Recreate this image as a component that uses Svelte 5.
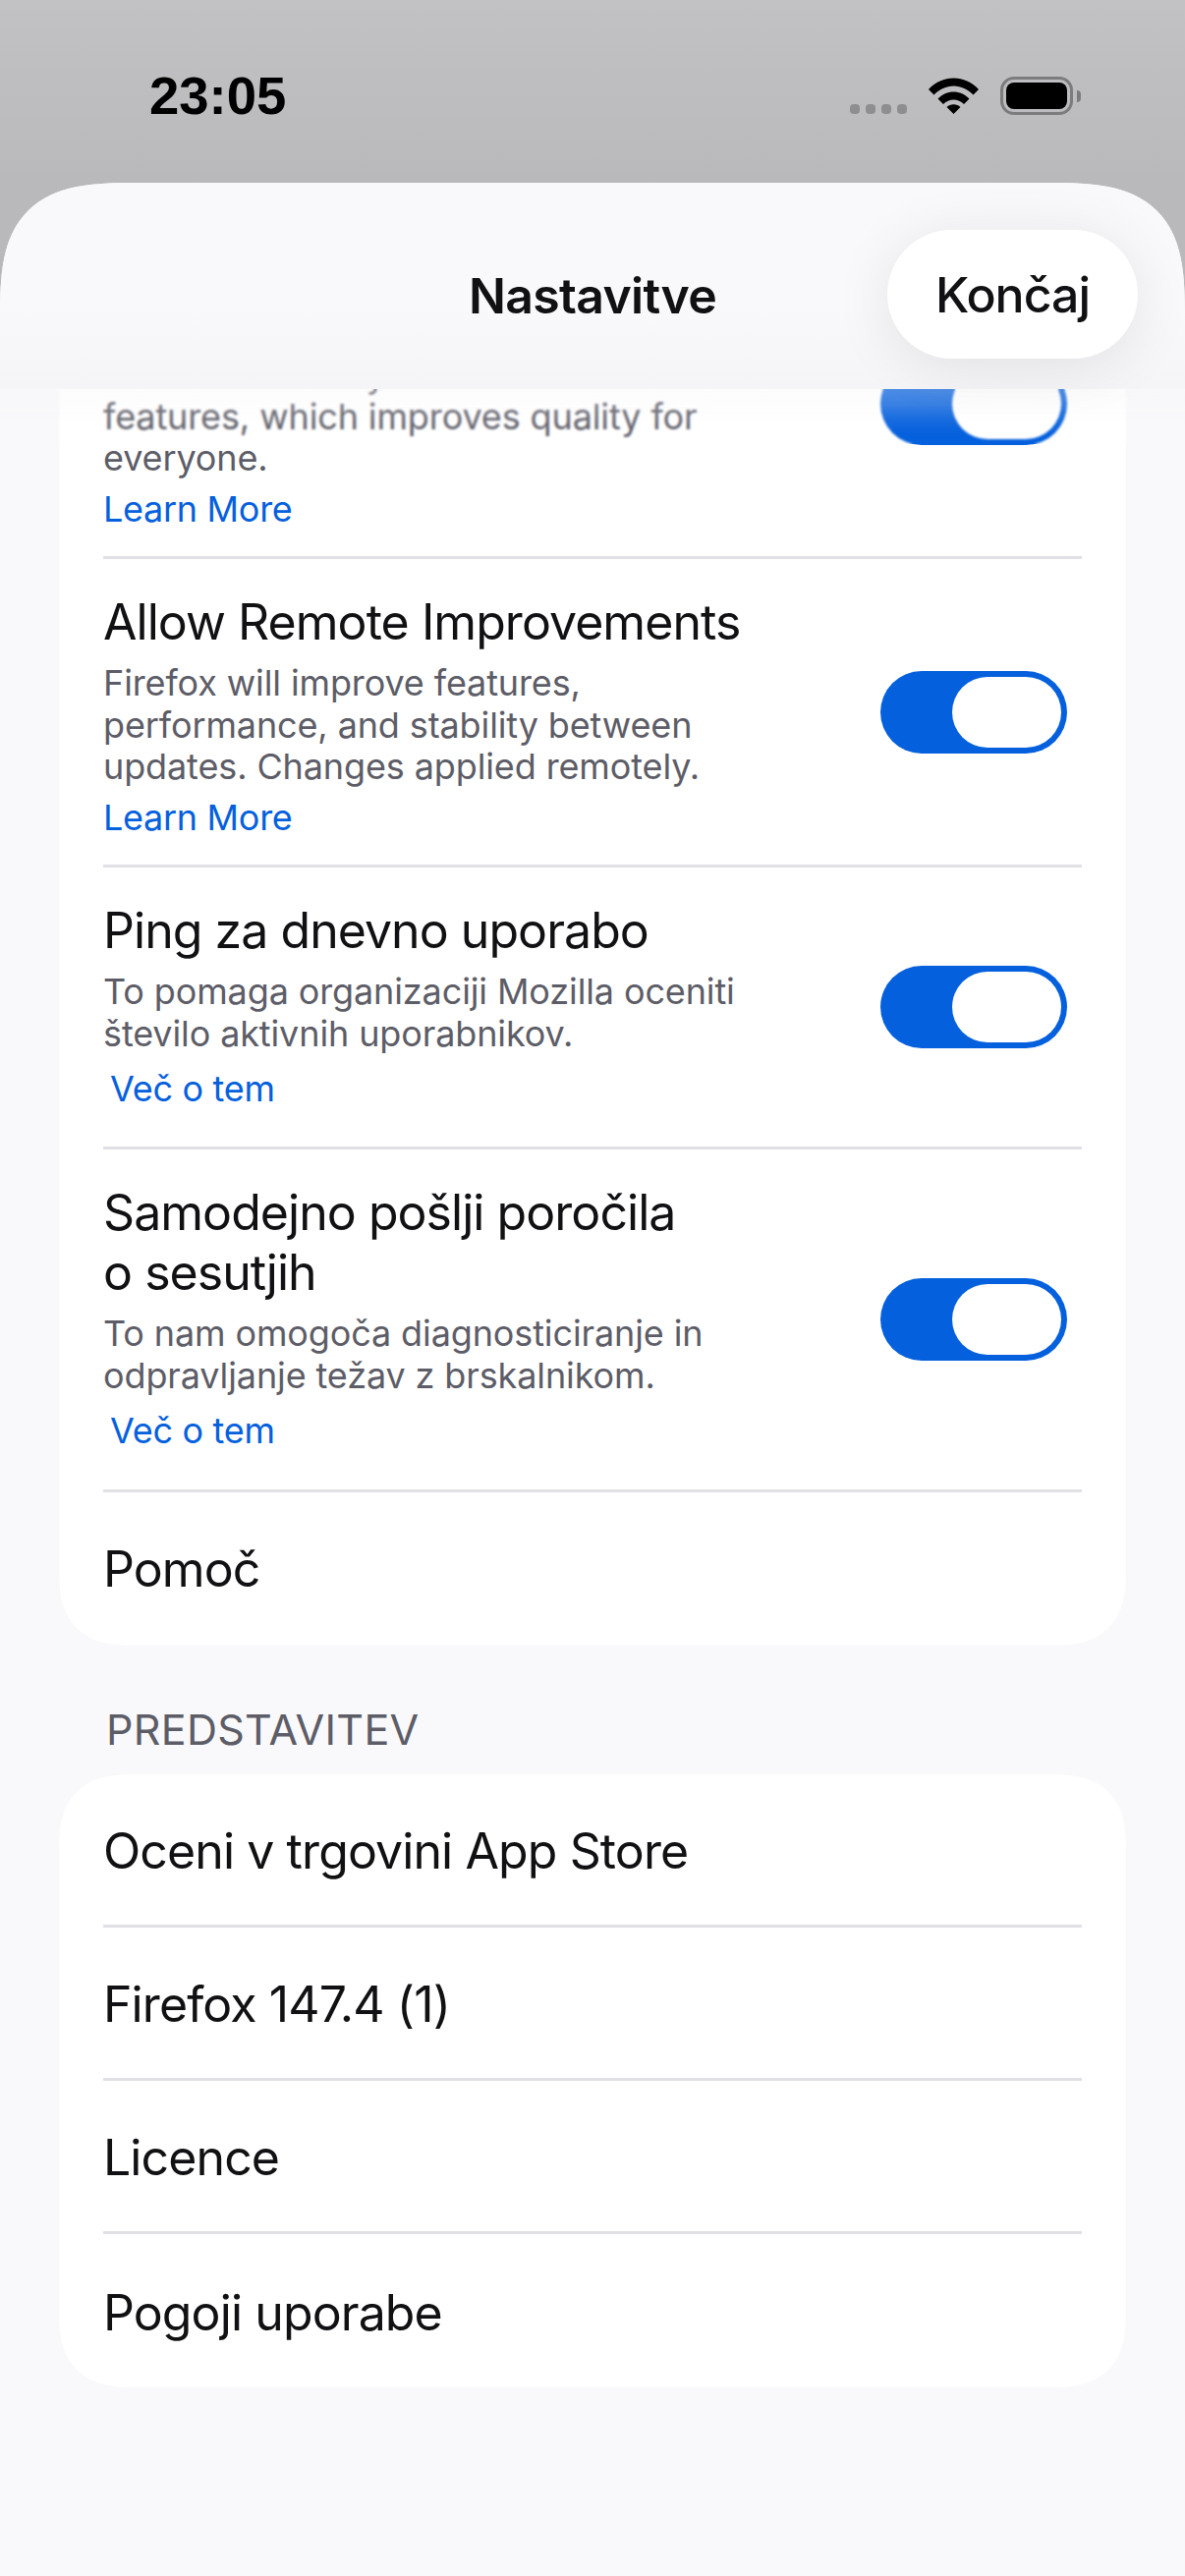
<script>
  const statusDots = [0, 1, 2, 3];

  const privacyRows = [
    {
      title: [],
      desc: ['We collect how you use', 'features, which improves quality for', 'everyone.'],
      link: 'Learn More',
      kind: 'en'
    },
    {
      title: ['Allow Remote Improvements'],
      desc: ['Firefox will improve features,', 'performance, and stability between', 'updates. Changes applied remotely.'],
      link: 'Learn More',
      kind: 'en'
    },
    {
      title: ['Ping za dnevno uporabo'],
      desc: ['To pomaga organizaciji Mozilla oceniti', 'število aktivnih uporabnikov.'],
      link: 'Več o tem',
      kind: 'sl'
    },
    {
      title: ['Samodejno pošlji poročila', 'o sesutjih'],
      desc: ['To nam omogoča diagnosticiranje in', 'odpravljanje težav z brskalnikom.'],
      link: 'Več o tem',
      kind: 'sl'
    }
  ];

  const aboutRows = ['Oceni v trgovini App Store', 'Firefox 147.4 (1)', 'Licence', 'Pogoji uporabe'];
</script>

<div class="screen">
  <div class="status">
    <span class="time">23:05</span>
    <div class="status-icons">
      <div class="dots">
        {#each statusDots as d (d)}
          <i></i>
        {/each}
      </div>
      <svg class="wifi" width="51" height="37" viewBox="0 0 51 37">
        <path d="M0 12C7 4.500 16 .5 25.500 .5S44 4.500 51 12l-5.500 5.500C40 12 33 8.500 25.500 8.500S11 12 5.500 17.500z" />
        <path d="M9.500 21.500C14 17 19.500 14.500 25.500 14.500S37 17 41.500 21.500L36 27c-3-3-6.500-4.500-10.500-4.500S18 24 15 27z" />
        <path d="M18.500 30c2-1.800 4.400-2.800 7-2.800s5 1 7 2.800l-7 7z" />
      </svg>
      <div class="battery">
        <div class="battery-shell"><div class="battery-fill"></div></div>
        <div class="battery-cap"></div>
      </div>
    </div>
  </div>

  <div class="sheet">
    <header class="nav">
      <h1>Nastavitve</h1>
      <button class="done">Končaj</button>
    </header>

    <div class="scroll">
      <div class="fade"></div>
      <div class="content">
        <section class="card first">
          {#each privacyRows as row}
            <div class="row toggle-row {row.kind}" class:tall={row.title.length > 1}>
              <div class="text">
                <div class="title">
                  {#each row.title as line}
                    <div>{line}</div>
                  {/each}
                </div>
                <p class="desc">
                  {#each row.desc as line}
                    <span>{line}</span>
                  {/each}
                </p>
                <a class="link" href="#more">{row.link}</a>
              </div>
              <span class="toggle"><span class="thumb"></span></span>
            </div>
          {/each}
          <div class="row plain">Pomoč</div>
        </section>

        <h2>PREDSTAVITEV</h2>

        <section class="card about">
          {#each aboutRows as label}
            <div class="row plain">{label}</div>
          {/each}
        </section>
      </div>
    </div>
  </div>
</div>

<style>
  :global(body) {
    margin: 0;
    background: #f9f9fb;
  }

  .screen {
    width: 1206px;
    height: 2622px;
    overflow: hidden;
    display: flex;
    flex-direction: column;
    background: linear-gradient(#c2c2c4, #b9b9bb 186px);
    font-family: Inter, "Noto Sans", sans-serif;
    color: #111114;
  }

  .status {
    height: 186px;
    flex: none;
    box-sizing: border-box;
    padding: 68px 106px 0 152px;
    display: flex;
    justify-content: space-between;
    align-items: flex-start;
  }

  .time {
    font-family: "Liberation Sans", sans-serif;
    font-size: 54.500px;
    line-height: 60px;
    font-weight: 700;
    color: #000;
  }

  .status-icons {
    display: flex;
    align-items: flex-start;
  }

  .dots {
    display: flex;
    gap: 6px;
    margin-top: 38px;
    margin-right: 22px;
  }

  .dots i {
    width: 10px;
    height: 10px;
    border-radius: 4px;
    background: #8e8e90;
  }

  .wifi {
    margin-top: 11px;
    margin-right: 22px;
  }

  .battery {
    display: flex;
    align-items: center;
    margin-top: 10px;
  }

  .battery-shell {
    width: 74px;
    height: 39px;
    box-sizing: border-box;
    border: 3px solid #7c7c7e;
    border-radius: 14px;
    padding: 3px;
  }

  .battery-fill {
    height: 100%;
    background: #000;
    border-radius: 8px;
  }

  .battery-cap {
    width: 4px;
    height: 12px;
    margin-left: 4px;
    background: #7c7c7e;
    border-radius: 0 4px 4px 0;
  }

  .sheet {
    flex: 1;
    min-height: 0;
    display: flex;
    flex-direction: column;
    background: #f9f9fb;
    border-radius: 140px 140px 0 0;
    corner-shape: superellipse(1.6);
    overflow: hidden;
  }

  .nav {
    height: 210px;
    flex: none;
    position: relative;
    z-index: 1;
    display: flex;
    align-items: center;
    justify-content: center;
    background: linear-gradient(#f9f9fb 60%, #f5f5f7);
  }

  h1 {
    margin: 0;
    font-size: 50px;
    font-weight: 600;
    letter-spacing: -0.7px;
    position: relative;
    top: 10px;
  }

  .done {
    position: absolute;
    left: 903px;
    top: 48px;
    width: 255px;
    height: 131px;
    border: 0;
    border-radius: 66px;
    background: #fff;
    box-shadow: 0 8px 60px rgba(0, 0, 0, 0.09);
    font: 500 50px Inter, sans-serif;
    letter-spacing: -1px;
    color: #111114;
    padding: 0;
  }

  .scroll {
    flex: 1;
    min-height: 0;
    overflow: hidden;
    position: relative;
  }

  .fade {
    position: absolute;
    left: 0;
    right: 0;
    top: 0;
    height: 56px;
    background: linear-gradient(rgba(246, 246, 248, 0.3), rgba(246, 246, 248, 0));
    backdrop-filter: blur(1px);
    mask-image: linear-gradient(#000 30%, transparent);
  }

  .content {
    margin-top: -141px;
    padding: 0 60px;
  }

  .card {
    background: #fff;
    border-radius: 78px;
    corner-shape: superellipse(1.4);
    overflow: hidden;
  }

  .row {
    margin-left: 45px;
    margin-right: 45px;
    box-sizing: border-box;
    border-bottom: 3px solid #e0e0e5;
  }

  .row:last-child {
    border-bottom: 0;
  }

  .toggle-row {
    display: flex;
    justify-content: space-between;
    align-items: center;
    padding-right: 15px;
  }

  .en {
    height: 314px;
  }

  .sl {
    height: 287px;
  }

  .sl.tall {
    height: 349px;
  }

  .text {
    align-self: flex-start;
    padding-top: 34px;
  }

  .title {
    min-height: 61px;
    font-size: 50px;
    line-height: 61px;
    letter-spacing: -0.95px;
    margin-bottom: 10px;
  }

  .desc {
    margin: 0;
    font-size: 36px;
    line-height: 42.600px;
    letter-spacing: -0.12px;
    color: #5d5d67;
  }

  .desc span {
    display: block;
  }

  .link {
    display: block;
    margin-top: 8px;
    font-size: 36px;
    line-height: 44px;
    letter-spacing: -0.3px;
    color: #0560dd;
    text-decoration: none;
  }

  .sl .link {
    margin-top: 13px;
    margin-left: 7px;
  }

  .toggle {
    width: 190px;
    height: 84px;
    flex: none;
    display: flex;
    justify-content: flex-end;
    align-items: center;
    box-sizing: border-box;
    padding-right: 6px;
    border-radius: 42px;
    background: #0560dd;
  }

  .thumb {
    width: 111px;
    height: 72px;
    border-radius: 36px;
    background: #fff;
  }

  .plain {
    display: flex;
    align-items: center;
    height: 156px;
    font-size: 50px;
    letter-spacing: -0.9px;
  }

  .about .plain {
    padding-top: 3px;
  }

  h2 {
    margin: 60px 0 21px 48px;
    font-size: 43px;
    line-height: 50px;
    font-weight: 400;
    letter-spacing: 0.3px;
    color: #5d5d67;
  }
</style>
